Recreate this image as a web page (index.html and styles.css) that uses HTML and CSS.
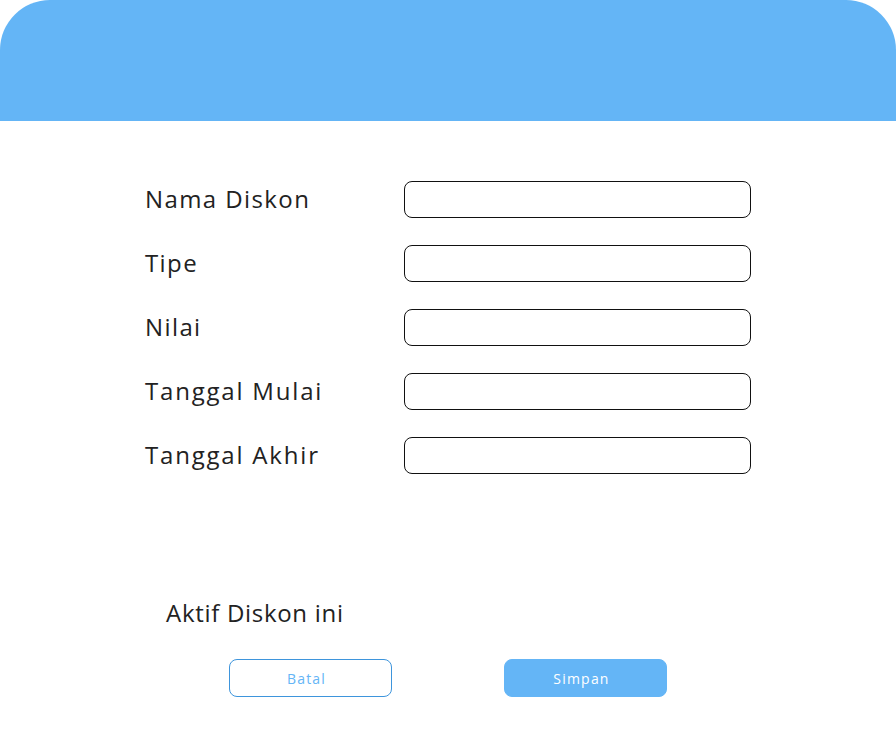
FILE: index.html
```html
<!DOCTYPE html>
<html>
<head>
<meta charset="utf-8">
<link rel="stylesheet" href="styles.css">
</head>
<body>
<div class="page">
  <header class="header"></header>
  <form class="form">
    <label class="label">Nama Diskon</label>
    <input class="field" type="text">
    <label class="label">Tipe</label>
    <input class="field" type="text">
    <label class="label">Nilai</label>
    <input class="field" type="text">
    <label class="label label-wide">Tanggal Mulai</label>
    <input class="field" type="text">
    <label class="label label-wide">Tanggal Akhir</label>
    <input class="field" type="text">
  </form>
  <div class="active">Aktif Diskon ini</div>
  <div class="actions">
    <button class="btn btn-outline" type="button">Batal</button>
    <button class="btn btn-fill" type="button">Simpan</button>
  </div>
</div>
</body>
</html>
```

FILE: styles.css
```css
* { box-sizing: border-box; }
html, body { margin: 0; padding: 0; background: #fff; }
body { font-family: "Open Sans", "Noto Sans", sans-serif; color: #222; }
.page { width: 896px; height: 746px; overflow: hidden; }
.header {
  height: 121px;
  background: #64b5f6;
  border-radius: 50px 50px 0 0;
}
.form {
  display: grid;
  grid-template-columns: 259px 347px;
  grid-auto-rows: 37px;
  row-gap: 27px;
  padding: 60px 0 0 145px;
  margin: 0;
}
.label {
  display: flex;
  align-items: center;
  padding-bottom: 2px;
  font-size: 24px;
  letter-spacing: 1.4px;
  color: #222;
}
.label-wide { letter-spacing: 1.8px; }
.field {
  width: 347px;
  height: 37px;
  border: 1px solid #111;
  border-radius: 8px;
  background: #fff;
  margin: 0;
  padding: 0 10px;
  outline: none;
}
.active {
  margin: 123px 0 0 166px;
  height: 32px;
  line-height: 32px;
  font-size: 24px;
  letter-spacing: 0.7px;
  color: #222;
}
.actions {
  display: flex;
  gap: 112px;
  padding-left: 229px;
  margin-top: 30px;
}
.btn {
  width: 163px;
  height: 38px;
  border-radius: 8px;
  font-family: "Open Sans", "Noto Sans", sans-serif;
  font-size: 14px;
  letter-spacing: 1.2px;
  cursor: pointer;
  padding: 0 8px 0 0;
}
.btn-outline {
  background: #fff;
  border: 1px solid #3e95dc;
  color: #64b5f6;
}
.btn-fill {
  background: #64b5f6;
  border: 1px solid #64b5f6;
  color: #fff;
}
```
